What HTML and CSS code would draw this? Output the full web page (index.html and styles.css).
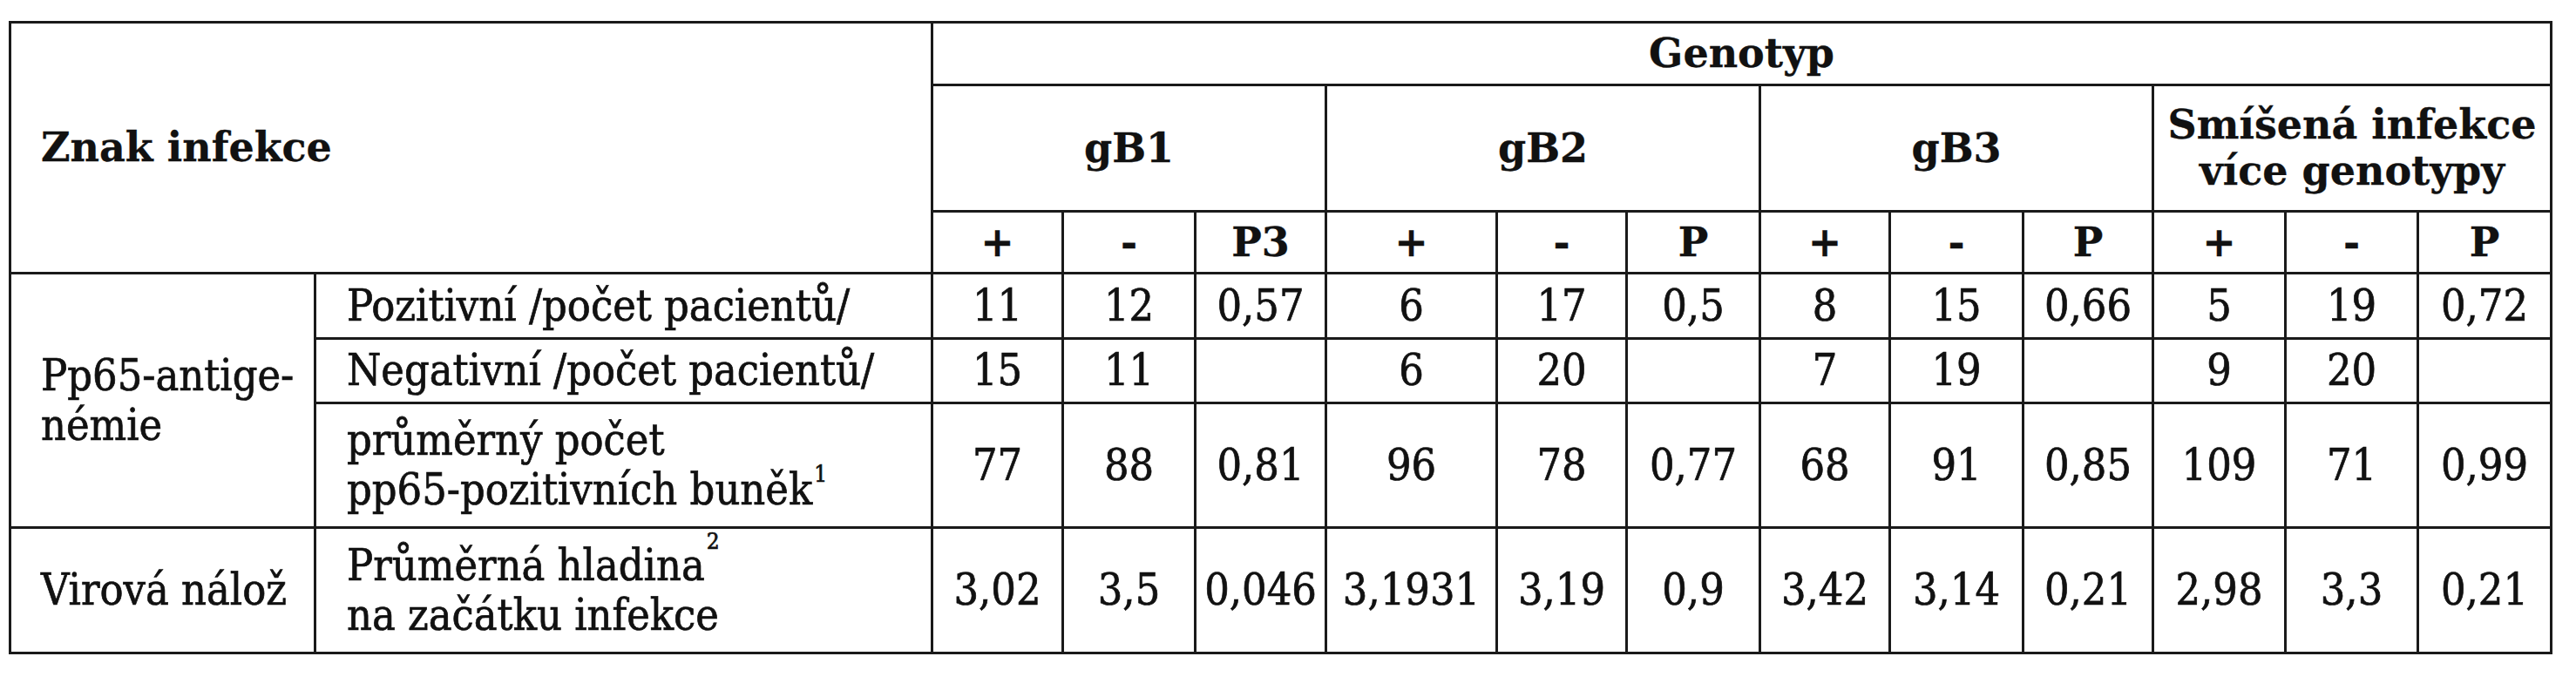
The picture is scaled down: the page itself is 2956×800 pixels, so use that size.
FILE: index.html
```html
<!DOCTYPE html>
<html lang="cs">
<head>
<meta charset="utf-8">
<title>Genotyp</title>
<link rel="stylesheet" href="styles.css">
</head>
<body>
<table class="data">
  <colgroup>
    <col class="w350"><col class="w708">
    <col class="w150"><col class="w152"><col class="w150">
    <col class="w196"><col class="w149"><col class="w153">
    <col class="w149"><col class="w153"><col class="w149">
    <col class="w152"><col class="w152"><col class="w153">
  </colgroup>
  <tr class="r1">
    <th class="corner" colspan="2" rowspan="3">Znak infekce</th>
    <th colspan="12">Genotyp</th>
  </tr>
  <tr class="r2">
    <th colspan="3">gB1</th>
    <th colspan="3">gB2</th>
    <th colspan="3">gB3</th>
    <th colspan="3" class="mixed">Smíšená infekce<br>více genotypy</th>
  </tr>
  <tr class="r3">
    <th>+</th><th>-</th><th>P3</th>
    <th>+</th><th>-</th><th>P</th>
    <th>+</th><th>-</th><th>P</th>
    <th>+</th><th>-</th><th>P</th>
  </tr>
  <tr class="r4">
    <td class="group" rowspan="3">Pp65-antige-<br>némie</td>
    <td class="desc">Pozitivní /počet pacientů/</td>
    <td>11</td><td>12</td><td>0,57</td>
    <td>6</td><td>17</td><td>0,5</td>
    <td>8</td><td>15</td><td>0,66</td>
    <td>5</td><td>19</td><td>0,72</td>
  </tr>
  <tr class="r5">
    <td class="desc">Negativní /počet pacientů/</td>
    <td>15</td><td>11</td><td></td>
    <td>6</td><td>20</td><td></td>
    <td>7</td><td>19</td><td></td>
    <td>9</td><td>20</td><td></td>
  </tr>
  <tr class="r6">
    <td class="desc">průměrný počet<br>pp65-pozitivních buněk<sup class="note n1">1</sup></td>
    <td>77</td><td>88</td><td>0,81</td>
    <td>96</td><td>78</td><td>0,77</td>
    <td>68</td><td>91</td><td>0,85</td>
    <td>109</td><td>71</td><td>0,99</td>
  </tr>
  <tr class="r7">
    <td class="group">Virová nálož</td>
    <td class="desc">Průměrná hladina<sup class="note n2">2</sup><br>na začátku infekce</td>
    <td>3,02</td><td>3,5</td><td>0,046</td>
    <td>3,1931</td><td>3,19</td><td>0,9</td>
    <td>3,42</td><td>3,14</td><td>0,21</td>
    <td>2,98</td><td>3,3</td><td>0,21</td>
  </tr>
</table>
</body>
</html>
```

FILE: styles.css
```css
html, body {
  margin: 0;
  padding: 0;
  background: #ffffff;
}

body {
  font-family: "DejaVu Serif Condensed", "DejaVu Serif", "Liberation Serif", serif;
  font-size: 50px;
  color: #111111;
}

.data {
  margin: 24px 0 0 10px;
  border-collapse: separate;
  border-spacing: 0;
  table-layout: fixed;
  width: 2919px;
  border-top: 3px solid #1a1a1a;
  border-left: 3px solid #1a1a1a;
}

.w350 { width: 350px; }
.w708 { width: 708px; }
.w150 { width: 150px; }
.w152 { width: 152px; }
.w196 { width: 196px; }
.w149 { width: 149px; }
.w153 { width: 153px; }

.data th,
.data td {
  border-right: 3px solid #1a1a1a;
  border-bottom: 3px solid #1a1a1a;
  padding: 0;
  text-align: center;
  vertical-align: middle;
  line-height: 57px;
  white-space: nowrap;
  -webkit-text-stroke: 0.7px #111111;
}

.data th {
  font-family: "DejaVu Serif", "Liberation Serif", serif;
  font-size: 46px;
  font-weight: bold;
  -webkit-text-stroke: 0.3px #111111;
}

.r1 { height: 72px; }
.r2 { height: 145px; }
.r3 { height: 71px; }
.r4 { height: 75px; }
.r5 { height: 74px; }
.r6 { height: 143px; }
.r7 { height: 144px; }

.data th.corner {
  text-align: left;
  padding-left: 34px;
}

.data th.mixed {
  line-height: 53px;
}

.data td.group {
  text-align: left;
  padding-left: 34px;
}

.data td.desc {
  text-align: left;
  padding-left: 35px;
}

.note {
  font-size: 26px;
  line-height: 0;
  margin-left: 2px;
}

.n1 { vertical-align: 26px; }
.n2 { vertical-align: 36px; }
```
